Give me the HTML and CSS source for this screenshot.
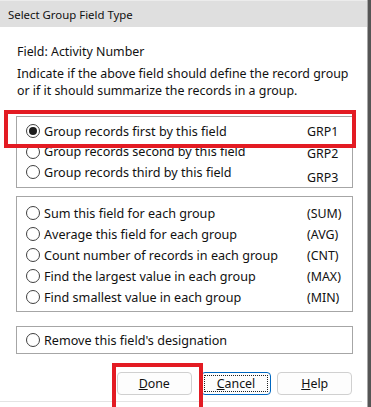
FILE: index.html
```html
<!DOCTYPE html>
<html>
<head>
  <title>Select Group Field Type</title>
  <link rel="stylesheet" href="styles.css">
</head>
<body>

  <div class="dialog">
    <div class="titlebar">Select Group Field Type</div>

    <div class="content">
      <p class="field-name">Field: Activity Number</p>
      <p class="hint">Indicate if the above field should define the record group<br>or if it should summarize the records in a group.</p>

      <div class="group group-grp">
        <label class="opt"><span class="radio checked"></span><span class="opt-label">Group records first by this field</span><span class="tag">GRP1</span></label>
        <label class="opt"><span class="radio"></span><span class="opt-label">Group records second by this field</span><span class="tag drop1">GRP2</span></label>
        <label class="opt"><span class="radio"></span><span class="opt-label">Group records third by this field</span><span class="tag drop2">GRP3</span></label>
      </div>

      <div class="group group-sum">
        <label class="opt"><span class="radio"></span><span class="opt-label">Sum this field for each group</span><span class="tag">(SUM)</span></label>
        <label class="opt"><span class="radio"></span><span class="opt-label">Average this field for each group</span><span class="tag">(AVG)</span></label>
        <label class="opt"><span class="radio"></span><span class="opt-label">Count number of records in each group</span><span class="tag">(CNT)</span></label>
        <label class="opt"><span class="radio"></span><span class="opt-label">Find the largest value in each group</span><span class="tag">(MAX)</span></label>
        <label class="opt"><span class="radio"></span><span class="opt-label">Find smallest value in each group</span><span class="tag">(MIN)</span></label>
      </div>

      <div class="group group-remove">
        <label class="opt"><span class="radio"></span><span class="opt-label">Remove this field's designation</span></label>
      </div>

      <div class="buttons">
        <button class="btn btn-done"><u>D</u>one</button>
        <button class="btn btn-cancel"><span class="focus"><u>C</u>ancel</span></button>
        <button class="btn btn-help"><u>H</u>elp</button>
      </div>
    </div>

    <div class="footer-line"></div>

    <!-- annotation boxes drawn over the dialog -->
    <div class="mark mark-grp"></div>
    <div class="mark mark-done"></div>
  </div>

</body>
</html>
```

FILE: styles.css
```css
body {
  margin: 0;
  background: #fff;
  font-family: "Noto Sans", "Open Sans", sans-serif;
  font-size: 12.4px;
  color: #111;
  overflow: hidden;
}

.dialog {
  position: relative;
  width: 371px;
  height: 407px;
  box-sizing: border-box;
  border-right: 3px solid #555;
  box-shadow: inset -1px 0 0 #a8a8a8;
}

.titlebar {
  height: 27px;
  line-height: 28px;
  padding-left: 8px;
  font-size: 11.4px;
  background: #dfdfdf;
  border-top: 1px solid #ececec;
  box-sizing: border-box;
  margin-right: 1px;
}

.content {
  padding: 0 16px;
}

.field-name {
  margin: 16px 0 0 1px;
  line-height: 17px;
}

.hint {
  margin: 5px 0 0 1px;
  line-height: 17px;
}

.group {
  width: 337px;
  box-sizing: border-box;
  border: 1px solid #a6a6a6;
  padding-left: 9px;
}

.group-grp {
  margin-top: 17px;
  height: 72px;
  padding-top: 4px;
}

.group-grp .opt {
  height: 20.5px;
}

.group-sum {
  margin-top: 8px;
  height: 116px;
  padding-top: 5.5px;
}

.group-remove {
  margin-top: 14px;
  height: 28px;
  padding-top: 2.5px;
}

.opt {
  display: flex;
  align-items: center;
  height: 21px;
  font-size: 12.6px;
}

.radio {
  width: 14px;
  height: 14px;
  box-sizing: border-box;
  border: 1px solid #404040;
  border-radius: 50%;
  background: #fff;
  flex: none;
  position: relative;
}

.radio.checked::after {
  content: "";
  position: absolute;
  left: 2px;
  top: 2px;
  width: 8px;
  height: 8px;
  border-radius: 50%;
  background: #1b1b1b;
}

.opt-label {
  margin-left: 4px;
  width: 263px;
  white-space: nowrap;
}

.tag {
  white-space: nowrap;
  font-size: 12.4px;
}

.tag.drop1 {
  margin-top: 4px;
}

.tag.drop2 {
  margin-top: 10px;
}

.buttons {
  display: flex;
  margin-top: 18px;
  padding-left: 101px;
}

.btn {
  height: 23px;
  box-sizing: border-box;
  border: 1px solid #d0d0d0;
  border-radius: 4px;
  background: #fdfdfd;
  font-family: inherit;
  font-size: 12.4px;
  color: #111;
  padding: 0;
}

.btn-done {
  width: 78px;
}

.btn-cancel {
  width: 74px;
  margin-left: 9px;
  border-color: #0067c0;
  padding: 2px;
}

.btn-cancel .focus {
  display: block;
  height: 100%;
  box-sizing: border-box;
  border: 1px dotted #222;
  line-height: 16px;
}

.btn-help {
  width: 78px;
  margin-left: 6px;
}

.footer-line {
  position: absolute;
  left: 0;
  right: 6px;
  top: 401px;
  height: 1px;
  background: #e4e4e4;
}

.mark {
  position: absolute;
  border: 4px solid #e31b23;
  box-sizing: border-box;
}

.mark-grp {
  left: 4px;
  top: 110px;
  width: 352px;
  height: 38px;
}

.mark-done {
  left: 112px;
  top: 363px;
  width: 91px;
  height: 48px;
}
```
